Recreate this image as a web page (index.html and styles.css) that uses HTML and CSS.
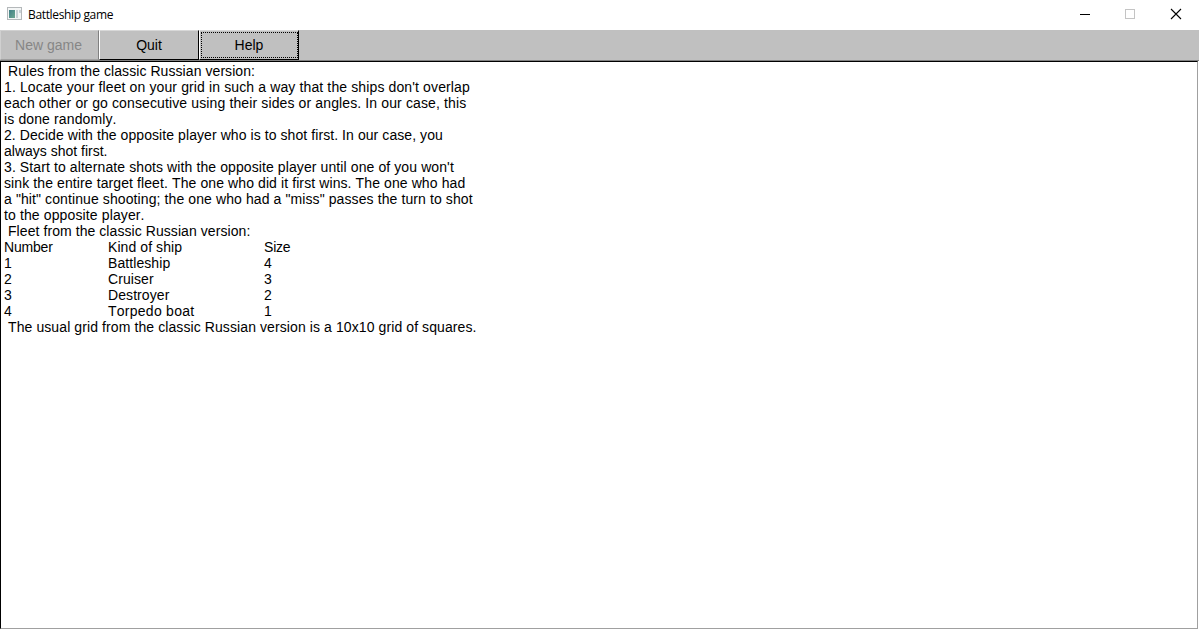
FILE: index.html
```html
<!DOCTYPE html>
<html lang="en">
<head>
<meta charset="utf-8">
<title>Battleship game</title>
<link rel="stylesheet" href="styles.css">
</head>
<body>
<div class="window">
  <header class="titlebar">
    <svg class="app-icon" width="16" height="14" viewBox="0 0 16 14">
      <defs>
        <linearGradient id="pane" x1="0" y1="0" x2="1" y2="1">
          <stop offset="0" stop-color="#3f7f86"/>
          <stop offset="1" stop-color="#6fa892"/>
        </linearGradient>
      </defs>
      <rect x="0.5" y="0.5" width="14" height="12" fill="#f4f6f6" stroke="#b4b8ba"/>
      <rect x="2" y="3" width="6" height="8" fill="url(#pane)"/>
      <rect x="9" y="3" width="2" height="8" fill="#c9d2d6"/>
      <rect x="12" y="3" width="2" height="3" fill="#c9d2d6"/>
    </svg>
    <span class="title">Battleship game</span>
    <svg class="controls" width="104" height="14" viewBox="0 0 104 14" fill="none" shape-rendering="crispEdges">
      <path d="M1 7.5H11" stroke="#000"/>
      <rect x="46.5" y="2.5" width="9" height="9" stroke="#c4c4c4"/>
      <path d="M92 2L102 12M102 2L92 12" stroke="#000" stroke-width="1.1" shape-rendering="auto"/>
    </svg>
  </header>
  <nav class="toolbar">
    <button class="btn btn-disabled" disabled>New game</button>
    <button class="btn">Quit</button>
    <button class="btn btn-focus"><span class="focus-ring">Help</span></button>
  </nav>
  <main class="view">
    <p class="indent">Rules from the classic Russian version:</p>
    <p class="wide">1. Locate your fleet on your grid in such a way that the ships don't overlap</p>
    <p class="wide">each other or go consecutive using their sides or angles. In our case, this</p>
    <p class="wide">is done randomly.</p>
    <p class="close">2. Decide with the opposite player who is to shot first. In our case, you</p>
    <p class="tight">always shot first.</p>
    <p>3. Start to alternate shots with the opposite player until one of you won't</p>
    <p>sink the entire target fleet. The one who did it first wins. The one who had</p>
    <p>a "hit" continue shooting; the one who had a "miss" passes the turn to shot</p>
    <p class="wide">to the opposite player.</p>
    <p class="indent">Fleet from the classic Russian version:</p>
    <div class="fleet">
      <span class="narrow">Number</span><span>Kind of ship</span><span class="narrow">Size</span>
      <span>1</span><span>Battleship</span><span>4</span>
      <span>2</span><span>Cruiser</span><span>3</span>
      <span>3</span><span>Destroyer</span><span>2</span>
      <span>4</span><span class="spaced">Torpedo boat</span><span>1</span>
    </div>
    <p class="indent grid-note">The usual grid from the classic Russian version is a 10x10 grid of squares.</p>
  </main>
</div>
</body>
</html>
```
FILE: styles.css
```css
* { box-sizing: border-box; }
body { margin: 0; background: #fff; }
.window {
  width: 1199px;
  height: 630px;
  display: flex;
  flex-direction: column;
  font: 14px/16px "Liberation Sans", Arial, sans-serif;
  font-kerning: none;
  color: #000;
}
.titlebar {
  height: 30px;
  flex: none;
  display: flex;
  align-items: center;
  padding: 0 16px 2px 7px;
}
.title {
  margin-left: 5px;
  padding-top: 1px;
  flex: 1;
  font: 12px/16px "Open Sans", "Noto Sans", sans-serif;
  letter-spacing: -0.35px;
}
.toolbar {
  height: 31px;
  flex: none;
  display: flex;
  background: #c0c0c0;
  border-bottom: 1px solid #808080;
}
.btn {
  width: 100px;
  height: 30px;
  padding: 0;
  font: inherit;
  color: #000;
  background: #c0c0c0;
  border: 1px solid;
  border-color: #d8d8d8 #000 #000 #fff;
}
.btn-disabled {
  width: 99px;
  padding-right: 2px;
  color: #868686;
  border-color: #d0d0d0 #808080 #a0a0a0 #d0d0d0;
}
.focus-ring {
  display: flex;
  align-items: center;
  justify-content: center;
  width: 97px;
  height: 26px;
  margin-left: 1px;
  padding-right: 1px;
  border: 1px dotted #000;
}
.view {
  flex: none;
  width: 1198px;
  height: 568px;
  padding: 1px 0 0 3px;
  border: 1px solid;
  border-color: #000 #a0a0a0 #a0a0a0 #000;
  white-space: nowrap;
}
.view p { margin: 0; letter-spacing: 0.1px; }
.view .indent { padding-left: 4px; letter-spacing: 0.07px; }
.view .grid-note { letter-spacing: 0.095px; }
.view .wide { letter-spacing: 0.125px; }
.view .close { letter-spacing: 0.075px; }
.view .tight { letter-spacing: 0; }
.fleet {
  display: grid;
  grid-template-columns: 104px 156px 60px;
  grid-auto-rows: 16px;
  letter-spacing: 0.08px;
}
.fleet .spaced { letter-spacing: 0.26px; }
.fleet .narrow { letter-spacing: -0.2px; }
```
